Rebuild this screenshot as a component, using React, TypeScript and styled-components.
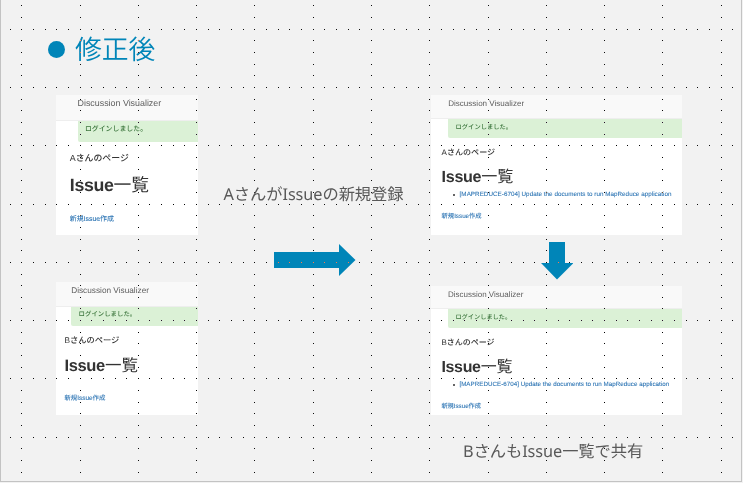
import React from 'react';
import styled, { createGlobalStyle } from 'styled-components';

const ACCENT = '#0085b8';

const GlobalStyle = createGlobalStyle`
  body {
    margin: 0;
    background: #f2f2f2;
    font-family: 'Liberation Sans', 'Noto Sans CJK JP', sans-serif;
    text-rendering: geometricPrecision;
  }
`;

const Slide = styled.main`
  position: relative;
  box-sizing: border-box;
  width: 742px;
  height: 482px;
  padding: 29px 59px 0 55px;
  overflow: hidden;
  background: #f2f2f2;
  border: solid #c3c3c3;
  border-width: 0 1px 1px;
  isolation: isolate;
`;

const Title = styled.h1`
  display: flex;
  align-items: center;
  gap: 10px;
  height: 40px;
  margin: 0 0 26px -8px;
  color: ${ACCENT};
  font: 350 26.8px/38px 'Noto Sans CJK JP', sans-serif;
  white-space: nowrap;
`;

const TitleText = styled.span`
  padding-bottom: 2px;
`;

const Bullet = styled.span`
  width: 17px;
  height: 17px;
  border-radius: 50%;
  background: ${ACCENT};
`;

const Columns = styled.div`
  display: grid;
  grid-template-columns: 142px 233px 251px;
`;

const Before = styled.div`
  display: flex;
  flex-direction: column;
  gap: 47px;
`;

const Transition = styled.div`
  display: flex;
  flex-direction: column;
  align-items: center;
  gap: 38px;
  padding-top: 87px;
`;

const After = styled.div`
  display: flex;
  flex-direction: column;
`;

const DownStep = styled.div`
  display: flex;
  height: 44px;
  padding: 7px 0 0 110px;
`;

const Caption = styled.p`
  margin: 0;
  color: #595959;
  font: 400 16.3px/24px 'Noto Sans', 'Noto Sans CJK JP', sans-serif;
  letter-spacing: -0.07px;
  white-space: nowrap;
`;

const StepCaption = styled(Caption)`
  padding-right: 2px;
`;

const SharedCaption = styled(Caption)`
  margin: 24px 0 0 32px;
`;

const Card = styled.section<{ $h: number; $scale: number }>`
  display: flex;
  flex-direction: column;
  height: ${p => p.$h}px;
  overflow: hidden;
  background: #fff;
  font-size: ${p => 14 * p.$scale}px;
  white-space: nowrap;
`;

const Nav = styled.header<{ $h: number; $line: number; $left: number }>`
  flex: none;
  box-sizing: border-box;
  height: ${p => p.$h}px;
  padding-left: ${p => p.$left}px;
  border-bottom: 1px solid #eee;
  background: #f9f9f9;
  color: #5e5e5e;
  font-size: 1.286em;
  line-height: ${p => p.$line}px;
`;

const Alert = styled.div<{ $h: number; $line: number; $left: number }>`
  flex: none;
  height: ${p => p.$h}px;
  margin-left: ${p => p.$left}px;
  padding-left: 7.4px;
  border-radius: 0 0 0 2px;
  background: #dbf1d6;
  color: #3c763d;
  font-weight: 500;
  line-height: ${p => p.$line}px;
`;

const Row = styled.div<{ $h: number; $left: number }>`
  flex: none;
  height: ${p => p.$h}px;
  padding-left: ${p => p.$left}px;
  line-height: ${p => p.$h}px;
`;

const PageName = styled(Row)`
  color: #333;
  font-size: 1.286em;
  font-weight: 500;
`;

const Heading = styled(Row)`
  color: #333;
  font-size: 2.571em;
`;

const Latin = styled.b`
  font-weight: 700;
  letter-spacing: -0.02em;
`;

const IssueItem = styled(Row)`
  display: flex;
  align-items: center;
  gap: 4.5px;
  color: #2a73b3;
  letter-spacing: 0.04px;
  -webkit-text-stroke: 0.08px #2a73b3;
  &::before {
    content: '';
    width: 2px;
    height: 2px;
    border-radius: 50%;
    background: #333;
  }
`;

const Link = styled(Row)<{ $gap: number }>`
  margin-top: ${p => p.$gap}px;
  color: #2a73b3;
  -webkit-text-stroke: 0.08px #2a73b3;
`;

const Arrow = styled.svg`
  display: block;
  fill: ${ACCENT};
`;

const DotGrid = styled.svg`
  position: absolute;
  inset: 0 auto auto -1px;
  fill: #fff;
  mix-blend-mode: difference;
  pointer-events: none;
`;

interface CardData {
  h: number; scale: number;
  user: string;
  nav: [number, number];
  alert: [number, number];
  alertLeft: number;
  left: number;
  name: number;
  heading: number;
  issue?: number;
  gap: number;
  link: number;
}

const beforeCards: CardData[] = [
  { h: 140, scale: 0.494, user: 'A', nav: [26, 17], alert: [21, 17], alertLeft: 21.5, left: 13.8, name: 32, heading: 22, gap: 15, link: 18 },
  { h: 133, scale: 0.459, user: 'B', nav: [25, 18], alert: [19, 16], alertLeft: 15.2, left: 8.4, name: 30, heading: 20, gap: 14, link: 17 },
];

const afterA: CardData = { h: 140, scale: 0.448, user: 'A', nav: [24, 18], alert: [19, 17], alertLeft: 17.2, left: 10.6, name: 29, heading: 20, issue: 16, gap: 6, link: 16 };
const afterB: CardData = { h: 129, scale: 0.444, user: 'B', nav: [23, 17], alert: [19, 17], alertLeft: 17, left: 10.4, name: 30, heading: 19, issue: 15, gap: 8, link: 14 };

const STEP = 58.29;
const range = (n: number) => Array.from({ length: n }, (_, i) => i);

function dots(): [number, number][] {
  const minor = STEP / 5;
  const out = new Map<string, [number, number]>();
  const add = (x: number, y: number) => {
    const p: [number, number] = [Math.round(x), Math.round(y)];
    out.set(p.join(), p);
  };
  range(13).forEach(c => range(41).forEach(r => add(21.25 + c * STEP, 28.7 + (r - 2) * minor)));
  range(8).forEach(r => range(63).forEach(c => add(21.25 + (c - 1) * minor, 28.7 + r * STEP)));
  return [...out.values()];
}

function IssueCard({ d }: { d: CardData }) {
  return (
    <Card $h={d.h} $scale={d.scale}>
      <Nav $h={d.nav[0]} $line={d.nav[1]} $left={d.alertLeft}>Discussion Visualizer</Nav>
      <Alert $h={d.alert[0]} $line={d.alert[1]} $left={d.alertLeft}>ログインしました。</Alert>
      <PageName $h={d.name} $left={d.left}>{d.user}さんのページ</PageName>
      <Heading $h={d.heading} $left={d.left}><Latin>Issue</Latin>一覧</Heading>
      {d.issue && (
        <IssueItem $h={d.issue} $left={d.left + 11.5}>
          [MAPREDUCE-6704] Update the documents to run MapReduce application
        </IssueItem>
      )}
      <Link $h={d.link} $left={d.left} $gap={d.gap}>新規Issue作成</Link>
    </Card>
  );
}

export default function App() {
  return (
    <>
      <GlobalStyle />
      <Slide lang="ja">
        <Title><Bullet /><TitleText>修正後</TitleText></Title>
        <Columns>
          <Before>
            {beforeCards.map(d => <IssueCard key={d.user} d={d} />)}
          </Before>
          <Transition>
            <StepCaption>AさんがIssueの新規登録</StepCaption>
            <Arrow width="82" height="32"><path d="M0 8H65V0L81.5 16 65 32V24H0Z" /></Arrow>
          </Transition>
          <After>
            <IssueCard d={afterA} />
            <DownStep>
              <Arrow width="32" height="38"><path d="M8 0H24V21H32.5L16 37.5 0 21H8Z" /></Arrow>
            </DownStep>
            <IssueCard d={afterB} />
            <SharedCaption>BさんもIssue一覧で共有</SharedCaption>
          </After>
        </Columns>
        <DotGrid width="742" height="482" shapeRendering="crispEdges">
          {dots().map(([x, y]) => <rect key={`${x},${y}`} x={x} y={y} width="1" height="1" />)}
        </DotGrid>
      </Slide>
    </>
  );
}
